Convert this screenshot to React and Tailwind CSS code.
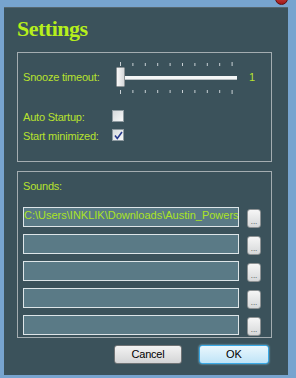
import React from "react";

const ticks = [0, 1, 2, 3, 4, 5, 6, 7, 8, 9];

function Slider() {
  // the trackbar is drawn as one small picture: ticks, groove and thumb
  return (
    <svg width="122" height="32" viewBox="0 0 122 32" className="block">
      <defs>
        <linearGradient id="thumb" x1="0" y1="0" x2="1" y2="0">
          <stop offset="0" stopColor="#fbfbfb" />
          <stop offset="1" stopColor="#d4d6d8" />
        </linearGradient>
      </defs>
      {ticks.map((i) => {
        const x = 4.5 + i * 12.4;
        const long = i === 0 || i === 9;
        return (
          <g key={i} stroke="#c9d1d5" strokeWidth="1">
            <line x1={x} y1={long ? 0 : 1} x2={x} y2="4" />
            <line x1={x} y1="28" x2={x} y2={long ? 32 : 31} />
          </g>
        );
      })}
      <rect x="8" y="14" width="113" height="4" fill="#f4f6f6" />
      <line x1="8" y1="17.5" x2="121" y2="17.5" stroke="#b9c0c3" />
      <rect x="0.5" y="5.5" width="8" height="19" rx="1" fill="url(#thumb)" stroke="#8c9396" />
    </svg>
  );
}

function Check({ checked }) {
  return (
    <div className="w-[12px] h-[12px] border border-[#8e9aa0] bg-gradient-to-br from-[#d6dadd] to-[#f7f8f8] flex items-center justify-center">
      {checked && (
        <svg width="9" height="9" viewBox="0 0 9 9">
          <path d="M1 4.5 L3.3 7.5 L8 1" fill="none" stroke="#283a8c" strokeWidth="1.6" />
        </svg>
      )}
    </div>
  );
}

function SoundRow({ value }) {
  return (
    <div className="flex items-start gap-[8px]">
      <div className="w-[216px] h-[20px] border border-[#dde5e8] bg-[#5a7a86] overflow-hidden">
        <div className="pt-px text-[11px] leading-[12px] whitespace-nowrap text-[#abe424]">{value}</div>
      </div>
      <button className="mt-[2px] w-[14px] h-[19px] rounded-[3px] border border-[#8d9294] bg-gradient-to-b from-[#f6f6f6] to-[#d6d8d9] flex items-end justify-center pb-[1px] text-[8px] leading-[8px] text-[#444]">
        ...
      </button>
    </div>
  );
}

export default function App() {
  const sounds = ["C:\\Users\\INKLIK\\Downloads\\Austin_Powers", "", "", "", ""];

  return (
    <div className="relative w-[296px] h-[378px] overflow-hidden bg-[#77a4cf] font-['Liberation_Sans',Arial,sans-serif] text-[11px]">
      {/* close button peeking at the top edge */}
      <div className="absolute left-[275px] top-[-8px] w-[13px] h-[13px] rounded-full border border-[#5a1010] bg-gradient-to-b from-[#e05050] to-[#a01818]" />

      <div className="pl-[4px] pt-[7px]">
        <div className="w-[284px] h-[368px] bg-[#3b525b] border-t border-[#56676f] px-[13px] flex flex-col">
          <h1 className="mt-[10px] h-[22px] text-[22px] leading-[22px] tracking-[-0.5px] font-bold font-['Liberation_Serif',serif] text-[#b6ef1c]">
            Settings
          </h1>

          <div className="mt-[12px] w-[255px] h-[110px] border border-[#a4adb1] pl-[5px] pt-[9px] text-[#b8e22e]">
            <div className="flex items-start h-[31px]">
              <span className="mt-[9px] w-[93px] leading-[13px] tracking-[-0.2px]">Snooze timeout:</span>
              <Slider />
              <span className="mt-[9px] ml-[11px] leading-[13px]">1</span>
            </div>
            <div className="mt-[13px] flex items-start h-[19px]">
              <span className="mt-[5px] w-[89px] leading-[13px] tracking-[-0.2px]">Auto Startup:</span>
              <div className="mt-[4px]">
                <Check />
              </div>
            </div>
            <div className="flex items-start h-[19px]">
              <span className="mt-[5px] w-[89px] leading-[13px] tracking-[-0.2px]">Start minimized:</span>
              <div className="mt-[4px]">
                <Check checked />
              </div>
            </div>
          </div>

          <div className="mt-[9px] w-[255px] h-[167px] border border-[#a4adb1] pl-[5px] pt-[8px] text-[#b8e22e]">
            <div className="leading-[13px] tracking-[-0.2px]">Sounds:</div>
            <div className="mt-[14px] flex flex-col gap-[6px]">
              {sounds.map((s, i) => (
                <SoundRow key={i} value={s} />
              ))}
            </div>
          </div>

          <div className="mt-[7px] flex justify-end gap-[17px] pr-[6px]">
            <button className="w-[68px] h-[19px] rounded-[3px] border border-[#707476] bg-gradient-to-b from-[#f3f3f3] to-[#d4d5d6] text-[11px] leading-[17px] tracking-[-0.2px] text-black">
              Cancel
            </button>
            <button className="w-[70px] h-[19px] rounded-[3px] border border-[#3aa9e6] shadow-[0_0_2px_#8fdcff] bg-gradient-to-b from-[#eaf7fd] to-[#bfe4f7] text-[11px] leading-[17px] text-black">
              OK
            </button>
          </div>
        </div>
      </div>
    </div>
  );
}
